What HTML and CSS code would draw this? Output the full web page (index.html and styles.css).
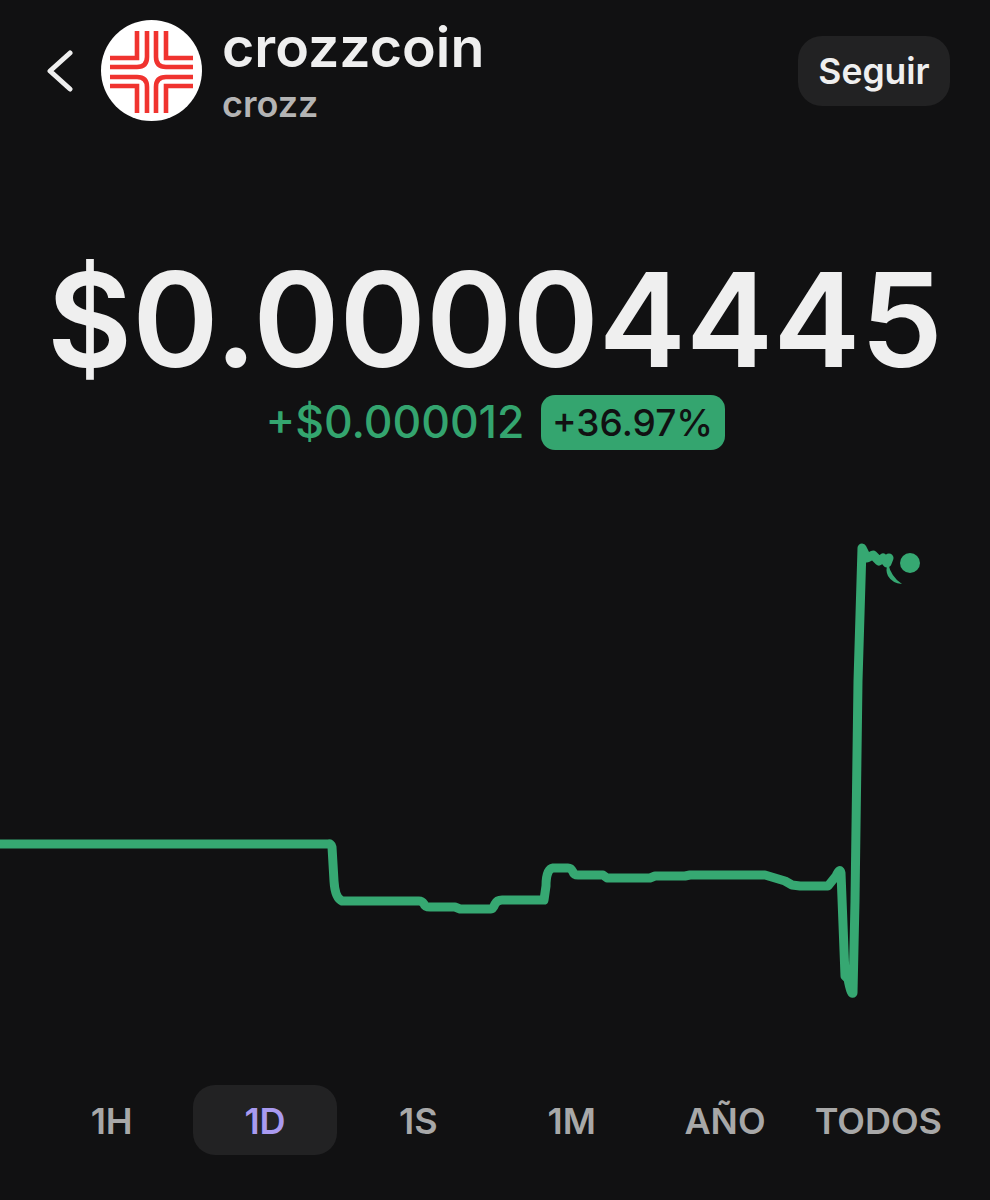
FILE: index.html
```html
<!DOCTYPE html>
<html lang="es">

<head>
    <meta charset="UTF-8">
    <meta name="viewport" content="width=device-width, initial-scale=1.0">
    <title>crozzcoin</title>
    <link rel="stylesheet" href="styles.css">
</head>

<body>
    <div class="container">
        <div class="header">
            <svg class="back" width="26" height="42" viewBox="0 0 26 42">
                <path d="M23 3 L3 21 L23 39" />
            </svg>
            <svg class="avatar" width="101" height="101" viewBox="0 0 101 101">
                <circle cx="50.5" cy="50.5" r="50.5" fill="#fff" />
                <path class="cross" d="M36 11 V38 H9 M46 11 V37 Q46 47 36 47 H9 M55 11 V37 Q55 47 65 47 H92 M65 11 V38 H92 M36 93 V66 H9 M46 93 V67 Q46 57 36 57 H9 M55 93 V67 Q55 57 65 57 H92 M65 93 V66 H92" />
            </svg>
            <div class="names">
                <h1>crozzcoin</h1>
                <p>crozz</p>
            </div>
            <button class="follow">Seguir</button>
        </div>

        <div class="price">$0.00004445</div>
        <div class="change">
            <span class="amount">+$0.000012</span>
            <span class="percent">+36.97%</span>
        </div>

        <svg class="chart" width="990" height="560" viewBox="0 500 990 560">
            <path class="line" d="M-5 843 H328 Q331 842 332 846 L334 880 Q335 897 342 900 H419 Q422 900 424 903 Q425 906 430 906 H455 L460 908 H491 Q493 908 495 903 Q497 899 502 899 H544 L546 885 Q546 868 553 867 H568 Q571 867 573 871 Q574 874 578 874 H603 L607 877 H650 L655 875 H685 L690 874 H765 L775 877 L785 880 L792 884 L800 885 H828 L836 875 Q840 866 841 872 L845 975 L848 978 Q851 994 853 992 L855 900 L858 680 L862 547 L867 557 L873 554 L879 560 L883 557 L887 562 L889 557" />
            <path class="tail" d="M888 562 Q891 576 902 583 Q892 582 888 575 Q885 569 888 562 Z" />
            <circle class="dot" cx="910" cy="562" r="10" />
        </svg>

        <div class="ranges">
            <div class="range">1H</div>
            <div class="range active">1D</div>
            <div class="range">1S</div>
            <div class="range">1M</div>
            <div class="range">AÑO</div>
            <div class="range">TODOS</div>
        </div>
    </div>
</body>

</html>
```

FILE: styles.css
```css
*{
    margin: 0;
    padding: 0;
    box-sizing: border-box;
}
body{
    background-color: #111112;
    color: #efefef;
    font-family: Inter, "Liberation Sans", sans-serif;
}
.container {
    width: 990px;
    height: 1200px;
    overflow: hidden;
}

.header {
    display: flex;
    align-items: center;
    padding: 20px 40px 0 47px;
    height: 121px;
}
.back {
    flex: none;
    margin-right: 28px;
}
.back path {
    fill: none;
    stroke: #efefef;
    stroke-width: 5;
    stroke-linecap: round;
    stroke-linejoin: round;
}
.avatar {
    flex: none;
    margin-right: 20px;
}
.cross {
    fill: none;
    stroke: #f0332f;
    stroke-width: 4.6;
}
.names {
    flex: 1;
    align-self: flex-start;
    margin-top: -5px;
}
.names h1 {
    font-size: 55.5px;
    line-height: 63px;
    font-weight: 600;
}
.names p {
    font-size: 36px;
    line-height: 52px;
    font-weight: 600;
    color: #b4b4b4;
}
.follow {
    width: 152px;
    height: 70px;
    margin-top: 1px;
    background-color: #222223;
    color: #efefef;
    border: none;
    border-radius: 24px;
    font-family: inherit;
    font-size: 35.5px;
    font-weight: 600;
}

.price {
    margin-top: 116px;
    text-align: center;
    font-size: 131px;
    line-height: 165px;
    font-weight: 600;
    white-space: nowrap;
}
.change {
    display: flex;
    justify-content: center;
    align-items: center;
    gap: 16px;
    height: 56px;
    margin-top: -8px;
    font-size: 37px;
    font-weight: 500;
}
.amount {
    font-size: 44.5px;
    color: #34a56f;
}
.percent {
    padding: 5px 11.5px;
    line-height: 45px;
    background-color: #34a56f;
    color: #111112;
    border-radius: 14px;
}

.chart {
    display: block;
    margin-top: 51px;
}
.line {
    fill: none;
    stroke: #36a872;
    stroke-width: 9;
    stroke-linejoin: round;
    stroke-linecap: round;
}
.tail, .dot {
    fill: #36a872;
}

.ranges {
    display: grid;
    grid-template-columns: repeat(6, 1fr);
    gap: 10px;
    padding: 0 40px;
    margin-top: 24px;
}
.range {
    height: 70px;
    line-height: 72px;
    text-align: center;
    font-size: 36px;
    font-weight: 600;
    color: #a8a8a8;
    border-radius: 22px;
    white-space: nowrap;
}
.range.active {
    background-color: #222223;
    color: #a99af0;
}
```
